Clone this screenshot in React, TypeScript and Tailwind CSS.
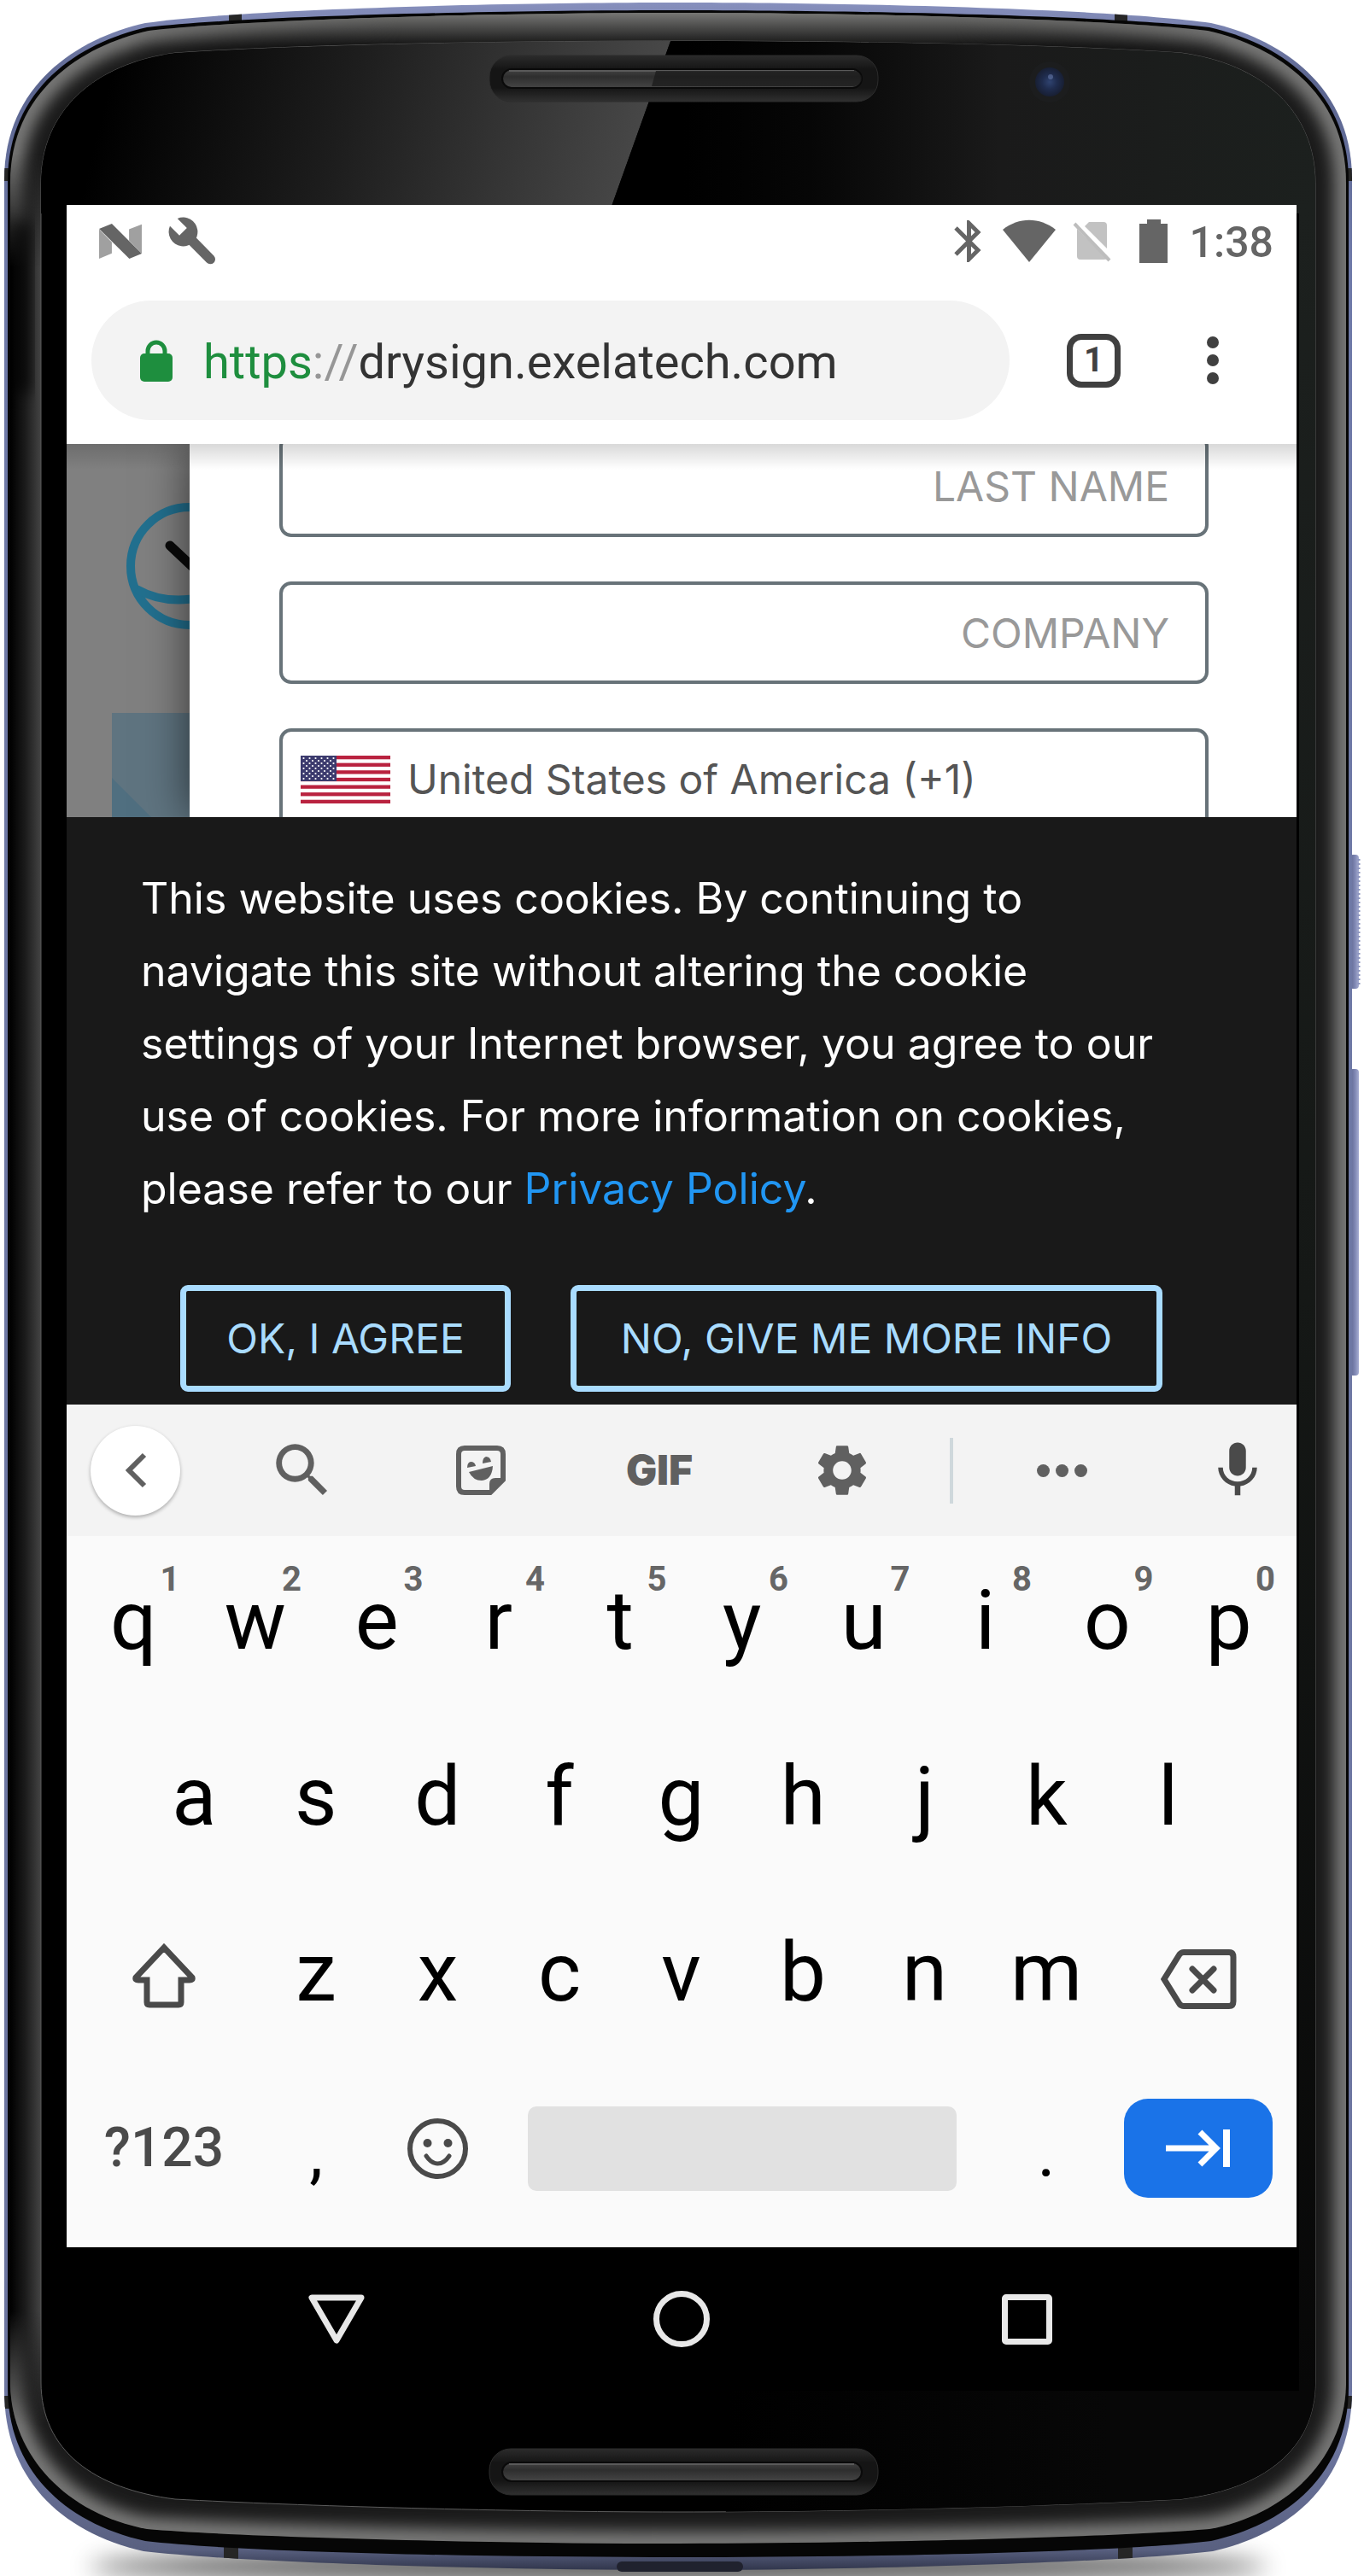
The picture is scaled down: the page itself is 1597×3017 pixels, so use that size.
import type { ReactNode } from "react";
import { MdBluetooth, MdMic, MdSearch, MdSettings } from "react-icons/md";

const OUTER =
  "M5 210 C5 100 90 45 170 27 C290 10 600 3 794 3 C988 3 1298 10 1418 27 C1498 45 1583 100 1583 210 V2800 C1583 2900 1520 2965 1420 2988 C1300 3002 1000 3010 794 3010 C588 3010 290 3002 168 2988 C68 2965 5 2900 5 2800 Z";
const RIM =
  "M9 212 C9 104 92 50 172 32 C292 18 600 12 794 12 C988 12 1296 18 1416 32 C1496 50 1579 104 1579 212 V2796 C1579 2890 1516 2954 1418 2976 C1300 2990 1000 2995 794 2995 C588 2995 290 2990 170 2976 C72 2954 9 2890 9 2796 Z";
const BEZEL =
  "M12 214 C12 108 94 54 174 36 C294 22 600 15 794 15 C988 15 1294 22 1414 36 C1494 54 1576 108 1576 214 V2790 C1576 2874 1512 2944 1416 2962 C1300 2972 1000 2979 794 2979 C588 2979 290 2972 172 2962 C76 2944 12 2874 12 2790 Z";
const GLASS =
  "M48 215 C48 130 110 75 205 62 C350 52 600 48 794 48 C988 48 1238 52 1383 62 C1478 75 1540 130 1540 215 V2790 C1540 2870 1478 2915 1383 2927 C1238 2935 988 2942 794 2942 C600 2942 350 2935 205 2927 C110 2915 48 2870 48 2790 Z";

function Grille({ y, split }: { y: number; split?: boolean }) {
  return (
    <g>
      <rect x="573" y={y} width="455" height="54" rx="25" fill="url(#grilleOuter)" stroke="#2c2c2c" />
      <rect x="588" y={y + 16} width="421" height="22" rx="11" fill="url(#grilleInner)" stroke="#0a0a0a" strokeWidth="2" />
      <rect x="596" y={y + 17} width="404" height="2" fill="#5a5a5a" />
      {split && <path d={`M768 ${y + 18} H1000 a9 9 0 0 1 0 18 H763 Z`} fill="#1b1b1b" opacity="0.75" />}
    </g>
  );
}

function DeviceFrame() {
  return (
    <svg className="absolute inset-0 h-full w-full" viewBox="0 0 1597 3017" preserveAspectRatio="none" aria-hidden="true">
      <defs>
        <linearGradient id="metal" x1="0" x2="0" y1="0" y2="1">
          <stop offset="0" stopColor="#8790bd" />
          <stop offset="0.03" stopColor="#5b658f" />
          <stop offset="0.1" stopColor="#6f7aa8" />
          <stop offset="0.95" stopColor="#6d76a0" />
          <stop offset="0.992" stopColor="#596080" />
          <stop offset="1" stopColor="#31364c" />
        </linearGradient>
        <linearGradient id="leftSide" gradientUnits="userSpaceOnUse" x1="12" x2="48" y1="0" y2="0">
          <stop offset="0" stopColor="#000" />
          <stop offset="0.5" stopColor="#1c1c1c" />
          <stop offset="1" stopColor="#444" />
        </linearGradient>
        <linearGradient id="sideFade" x1="0" x2="0" y1="0" y2="1">
          <stop offset="0" stopColor="#000" />
          <stop offset="0.05" stopColor="#fff" />
          <stop offset="0.95" stopColor="#fff" />
          <stop offset="1" stopColor="#000" />
        </linearGradient>
        <mask id="sideMask">
          <rect x="0" y="180" width="60" height="2660" fill="url(#sideFade)" />
        </mask>
        <linearGradient id="topLight" gradientUnits="userSpaceOnUse" x1="0" x2="0" y1="15" y2="56">
          <stop offset="0" stopColor="#777775" />
          <stop offset="0.4" stopColor="#4c4c4b" />
          <stop offset="1" stopColor="#0c0c0c" />
        </linearGradient>
        <linearGradient id="topSpread" x1="0" x2="1" y1="0" y2="0">
          <stop offset="0" stopColor="#000" />
          <stop offset="0.25" stopColor="#fff" />
          <stop offset="0.75" stopColor="#fff" />
          <stop offset="1" stopColor="#000" />
        </linearGradient>
        <mask id="topMask">
          <rect x="150" y="0" width="1288" height="80" fill="url(#topSpread)" />
        </mask>
        <linearGradient id="gloss" gradientUnits="userSpaceOnUse" x1="130" x2="740" y1="90" y2="240">
          <stop offset="0" stopColor="#000" />
          <stop offset="0.45" stopColor="#1e1e1e" />
          <stop offset="1" stopColor="#484848" />
        </linearGradient>
        <linearGradient id="rightGlass" gradientUnits="userSpaceOnUse" x1="800" x2="1540" y1="0" y2="0">
          <stop offset="0" stopColor="#000" />
          <stop offset="0.2" stopColor="#060606" />
          <stop offset="0.5" stopColor="#1a1a1a" />
          <stop offset="1" stopColor="#1c201e" />
        </linearGradient>
        <linearGradient id="bottomGlass" gradientUnits="userSpaceOnUse" x1="850" x2="1300" y1="0" y2="0">
          <stop offset="0" stopColor="#000" />
          <stop offset="1" stopColor="#070707" />
        </linearGradient>
        <linearGradient id="rightStrip" x1="0" x2="0" y1="0" y2="1">
          <stop offset="0" stopColor="#1c201e" />
          <stop offset="0.5" stopColor="#151816" />
          <stop offset="1" stopColor="#070707" />
        </linearGradient>
        <linearGradient id="grilleOuter" x1="0" x2="0" y1="0" y2="1">
          <stop offset="0" stopColor="#2b2b2b" />
          <stop offset="0.3" stopColor="#151515" />
          <stop offset="0.7" stopColor="#151515" />
          <stop offset="1" stopColor="#303030" />
        </linearGradient>
        <linearGradient id="grilleInner" x1="0" x2="0" y1="0" y2="1">
          <stop offset="0" stopColor="#444" />
          <stop offset="0.4" stopColor="#2e2e2e" />
          <stop offset="1" stopColor="#454545" />
        </linearGradient>
        <linearGradient id="sideKey" x1="0" x2="1" y1="0" y2="0">
          <stop offset="0" stopColor="#59628c" />
          <stop offset="0.6" stopColor="#8088b4" />
          <stop offset="1" stopColor="#a7aed2" />
        </linearGradient>
        <radialGradient id="lens">
          <stop offset="0" stopColor="#2f4370" />
          <stop offset="0.5" stopColor="#1f2c4e" />
          <stop offset="1" stopColor="#181f33" />
        </radialGradient>
        <filter id="soft" x="-10%" y="-10%" width="120%" height="120%">
          <feGaussianBlur stdDeviation="9" />
        </filter>
        <filter id="shadow" x="-20%" y="-200%" width="140%" height="500%">
          <feGaussianBlur stdDeviation="14" />
        </filter>
        <clipPath id="outerClip">
          <path d={OUTER} />
        </clipPath>
        <clipPath id="bezelClip">
          <path d={BEZEL} />
        </clipPath>
        <clipPath id="glassClip">
          <path d={GLASS} />
        </clipPath>
      </defs>
      <ellipse cx="794" cy="3006" rx="690" ry="22" fill="#000" opacity="0.6" filter="url(#shadow)" />
      <rect x="1580" y="1001" width="11" height="157" rx="4" fill="url(#sideKey)" />
      <path d="M1591 1006 V1153" stroke="#8e96bf" strokeWidth="3" strokeDasharray="2 3" />
      <rect x="1580" y="1252" width="11" height="359" rx="4" fill="url(#sideKey)" />
      <path d={OUTER} fill="url(#metal)" />
      <g fill="#262626" clipPath="url(#outerClip)">
        <path d="M268 5 h15 v25 h-15z M1305 5 h15 v25 h-15z" />
        <path d="M5 197 h6 v15 h-6z M1577 197 h6 v15 h-6z M5 2806 h6 v15 h-6z M1577 2806 h6 v15 h-6z" />
        <path d="M262 2975 h17 v30 h-17z M1309 2975 h17 v30 h-17z" />
      </g>
      <rect x="722" y="3000" width="148" height="12" rx="6" fill="#20222e" />
      <path d={RIM} fill="#060606" />
      <path d={BEZEL} fill="#1a1a1a" />
      <g clipPath="url(#bezelClip)">
        <path d={BEZEL} fill="none" stroke="#7c7c7a" strokeWidth="28" filter="url(#soft)" />
        <rect x="150" y="10" width="1288" height="60" fill="url(#topLight)" mask="url(#topMask)" />
        <rect x="0" y="180" width="60" height="2660" fill="url(#leftSide)" mask="url(#sideMask)" />
        <rect x="12" y="260" width="26" height="200" fill="#000" opacity="0.6" filter="url(#soft)" />
      </g>
      <path d={GLASS} fill="#000" stroke="#5b5b5b" strokeWidth="1" />
      <g clipPath="url(#glassClip)">
        <path d="M40 40 H788 L713 250 H40 Z" fill="url(#gloss)" />
        <path d="M788 40 H1545 V250 H713 Z" fill="url(#rightGlass)" />
        <rect x="1521" y="240" width="30" height="2560" fill="url(#rightStrip)" />
        <rect x="850" y="2800" width="700" height="160" fill="url(#bottomGlass)" />
      </g>
      <Grille y={65} split />
      <Grille y={2868} />
      <circle cx="1229" cy="96" r="24" fill="#1c1d1e" />
      <circle cx="1229" cy="96" r="17" fill="url(#lens)" />
      <circle cx="1230" cy="90" r="3" fill="#7286b8" opacity="0.5" />
    </svg>
  );
}

function StatusBar() {
  return (
    <div className="flex h-[84px] items-center pr-[27px] pl-[38px] text-[#656565]">
      <svg className="h-[41px] w-[50px]" viewBox="0 0 151 124" aria-hidden="true">
        <path d="M0 20 L45 66 V105 L0 124 Z M106 20 L151 2 V106 L106 60 Z" fill="#a0a0a0" />
        <path d="M0 18 L45 0 L151 106 L107 124 Z" fill="currentColor" />
      </svg>
      <svg className="ml-[31px] h-[56px] w-[56px]" viewBox="0 0 172 172" aria-hidden="true">
        <path d="M33 6 A52 52 0 1 1 6 33 L40 67 L67 40 Z" fill="currentColor" />
        <path d="M84 84 L151 152" stroke="currentColor" strokeWidth="36" strokeLinecap="round" />
      </svg>
      <div className="ml-auto flex items-center">
        <MdBluetooth className="size-[59px]" />
        <svg className="ml-[10px] h-[50px] w-[62px]" viewBox="0 0 62 50" aria-hidden="true">
          <path d="M0 12 C19 -3 43 -3 62 12 L31 50 Z" fill="currentColor" />
        </svg>
        <svg className="ml-[20px] h-[50px] w-[46px]" viewBox="0 0 46 50" aria-hidden="true">
          <path d="M14 8 L19 3 H36 Q40 3 40 7 V34 Z M5 11 L40 46 Q39 47 36 47 H9 Q5 47 5 43 Z" fill="#c2c2c2" />
          <path d="M2 5 L43 48" stroke="#bdbdbd" strokeWidth="4" />
        </svg>
        <svg className="ml-8 h-[51px] w-[33px]" viewBox="0 0 33 51" aria-hidden="true">
          <path d="M0 5 H9 V0 H25 V5 H33 V51 H0 Z" fill="currentColor" />
        </svg>
        <span className="ml-[26px] pt-1 text-[50px] leading-none font-medium">1:38</span>
      </div>
    </div>
  );
}

function AddressBar() {
  return (
    <div className="flex h-[196px] items-center pr-[84px] pl-[29px] text-[#404040]">
      <a href="#site" className="flex h-[140px] flex-1 items-center rounded-full bg-[#f3f3f3] pl-[57px]">
        <svg className="h-[49px] w-[38px]" viewBox="0 0 38 49" aria-hidden="true">
          <rect y="16" width="38" height="33" rx="5" fill="#1e8e3e" />
          <path d="M9 18 V13 a10 10 0 0 1 20 0 V18" fill="none" stroke="#1e8e3e" strokeWidth="5" />
        </svg>
        <span className="ml-9 pt-1 text-[56px] leading-none whitespace-nowrap text-[#333]">
          <span className="text-[#1e8e3e]">https</span>
          <span className="text-[#969696]">://</span>drysign.exelatech.com
        </span>
      </a>
      <button
        type="button"
        aria-label="Open tabs"
        className="ml-[67px] flex size-[63px] items-center justify-center rounded-[17px] border-[7px] border-[#404040] text-[40px] leading-none font-bold"
      >
        1
      </button>
      <button type="button" aria-label="Menu" className="ml-[94px] flex w-[28px] flex-col items-center gap-[7px]">
        <span className="size-[14px] rounded-full bg-[#404040]" />
        <span className="size-[14px] rounded-full bg-[#404040]" />
        <span className="size-[14px] rounded-full bg-[#404040]" />
      </button>
    </div>
  );
}

function Flag() {
  const stars = [];
  for (let row = 0; row < 9; row++) {
    const count = row % 2 === 0 ? 6 : 5;
    for (let i = 0; i < count; i++) {
      stars.push(<circle key={`${row}-${i}`} cx={3.5 + i * 7 + (row % 2) * 3.5} cy={3 + row * 3} r="1.1" fill="#fff" />);
    }
  }
  return (
    <svg className="h-[56px] w-[105px] shrink-0" viewBox="0 0 105 56" aria-hidden="true">
      <rect width="105" height="56" fill="#fff" />
      {[0, 1, 2, 3, 4, 5, 6].map((i) => (
        <rect key={i} y={i * 8.62} width="105" height="4.3" fill="#b9223f" />
      ))}
      <rect width="42" height="30" fill="#3c3b6e" />
      {stars}
    </svg>
  );
}

function SignupForm() {
  return (
    <div className="relative flex h-[437px] overflow-hidden bg-[#808080]">
      <div className="flex w-[144px] shrink-0 flex-col">
        <svg className="mt-[69px] ml-[70px] h-[148px] w-[74px]" viewBox="0 0 74 148" aria-hidden="true">
          <circle cx="74" cy="74" r="69" fill="none" stroke="#22708f" strokeWidth="10" />
          <path d="M12 101 Q42 118 80 112" fill="none" stroke="#22708f" strokeWidth="10" />
          <path d="M51 50 L84 81" stroke="#0a0a0a" strokeWidth="11" strokeLinecap="round" />
        </svg>
        <svg className="mt-[98px] ml-[53px] h-[122px] w-[91px]" viewBox="0 0 91 122" aria-hidden="true">
          <rect width="91" height="122" fill="#5f7480" />
          <path d="M0 76 L46 122 H0 Z" fill="#506f80" />
        </svg>
      </div>
      <div className="relative flex flex-1 flex-col bg-white pr-[103px] pl-[105px] font-[Inter,sans-serif] text-[48px] shadow-[0_0_50px_rgba(0,0,0,0.6)]">
        <div className="-mt-[11px] flex flex-col gap-[52px]">
          <input
            aria-label="Last name"
            placeholder="LAST NAME"
            className="h-[120px] w-full rounded-[14px] border-4 border-[#687379] px-[42px] text-right placeholder:text-[#999]"
          />
          <input
            aria-label="Company"
            placeholder="COMPANY"
            className="h-[120px] w-full rounded-[14px] border-4 border-[#687379] px-[42px] text-right placeholder:text-[#999]"
          />
          <div className="flex h-[120px] items-center gap-5 rounded-[14px] border-4 border-[#687379] pl-[21px] text-[#555]">
            <Flag />
            <select aria-label="Country" className="flex-1 appearance-none bg-transparent outline-none">
              <option>United States of America (+1)</option>
            </select>
          </div>
        </div>
      </div>
      <div className="pointer-events-none absolute inset-x-0 top-0 h-[30px] bg-linear-to-b from-black/15 to-transparent" />
    </div>
  );
}

function CookieNotice() {
  return (
    <section className="h-[688px] bg-[#191919] pt-[53px] pl-[87px] font-[Inter,sans-serif] text-[50px] text-white">
      <p className="leading-[85px] whitespace-nowrap">
        This website uses cookies. By continuing to
        <br />
        navigate this site without altering the cookie
        <br />
        settings of your Internet browser, you agree to our
        <br />
        use of cookies. For more information on cookies,
        <br />
        please refer to our{" "}
        <a href="#privacy" className="text-[#2196f3]">
          Privacy Policy
        </a>
        .
      </p>
      <div className="mt-[70px] ml-[46px] flex gap-[70px] text-[48px] whitespace-nowrap text-[#a9dcff]">
        <button type="button" className="h-[125px] w-[387px] rounded-[9px] border-[7px] border-[#a9dcff]">
          OK, I AGREE
        </button>
        <button type="button" className="h-[125px] w-[693px] rounded-[9px] border-[7px] border-[#a9dcff]">
          NO, GIVE ME MORE INFO
        </button>
      </div>
    </section>
  );
}

function Toolbar() {
  return (
    <div className="grid h-[154px] grid-cols-[161fr_230fr_188fr_230fr_198fr_58fr_200fr_175fr] items-center justify-items-center bg-[#f3f3f3] text-[#606060]">
      <button type="button" aria-label="Back" className="flex size-[105px] items-center justify-center rounded-full bg-white shadow-[0_2px_4px_rgba(0,0,0,0.3)]">
        <svg className="h-[42px] w-[26px]" viewBox="0 0 26 42" aria-hidden="true">
          <path d="M23 3 L5 21 L23 39" fill="none" stroke="currentColor" strokeWidth="6" />
        </svg>
      </button>
      <button type="button" aria-label="Search">
        <MdSearch className="size-[82px]" />
      </button>
      <button type="button" aria-label="Stickers">
        <svg className="size-[58px]" viewBox="0 0 58 58" fill="none" aria-hidden="true">
          <path d="M10 3 H48 Q55 3 55 10 V40 L40 55 H10 Q3 55 3 48 V10 Q3 3 10 3 Z" stroke="currentColor" strokeWidth="6" />
          <path d="M39 57 V45 Q39 38 46 38 H57 Z" fill="currentColor" />
          <path d="M15 31 L43 24 Q42 40 30 41 Q20 41 15 31 Z" fill="currentColor" />
          <path d="M13 26 Q13 20 17 19 Q22 19 23 24 Z M31 21 Q31 14 35 13 Q40 13 41 19 Z" fill="currentColor" />
        </svg>
      </button>
      <button type="button" className="font-[Inter,sans-serif] text-[48px] leading-none font-black">
        GIF
      </button>
      <button type="button" aria-label="Settings">
        <MdSettings className="size-[72px]" />
      </button>
      <span className="h-[77px] w-[4px] bg-[#cfd8dc]" />
      <button type="button" aria-label="More" className="flex gap-[7px]">
        <span className="size-[15px] rounded-full bg-[#606060]" />
        <span className="size-[15px] rounded-full bg-[#606060]" />
        <span className="size-[15px] rounded-full bg-[#606060]" />
      </button>
      <button type="button" aria-label="Voice input" className="justify-self-end pr-[30px] text-[#4a4a4a]">
        <MdMic className="size-[78px]" />
      </button>
    </div>
  );
}

function Key({ children, hint, label, className = "flex-1" }: { children?: ReactNode; hint?: string; label?: string; className?: string }) {
  return (
    <button type="button" aria-label={label} className={`relative flex h-full min-w-0 items-center justify-center pb-2 ${className}`}>
      {children}
      {hint && <span className="absolute top-[31px] right-[17px] text-[40px] leading-none font-bold text-[#666]">{hint}</span>}
    </button>
  );
}

function Keyboard() {
  return (
    <div className="bg-[#fafafa] pr-[8px] pb-[9px] pl-[7px] text-[96px] leading-none text-black">
      <div className="flex h-[206px]">
        {"qwertyuiop".split("").map((c, i) => (
          <Key key={c} hint={String((i + 1) % 10)}>
            {c}
          </Key>
        ))}
      </div>
      <div className="flex h-[206px] px-[71px]">
        {"asdfghjkl".split("").map((c) => (
          <Key key={c}>{c}</Key>
        ))}
      </div>
      <div className="flex h-[206px]">
        <Key label="Shift" className="flex-[1.5] text-[#4a4a4a]">
          <svg className="mt-2 h-[76px] w-[80px]" viewBox="0 0 80 76" aria-hidden="true">
            <path d="M40 5 L73 40 Q74 43 70 43 H60 V69 Q60 72 57 72 H23 Q20 72 20 69 V43 H10 Q6 43 7 40 Z" fill="none" stroke="currentColor" strokeWidth="7" />
          </svg>
        </Key>
        {"zxcvbnm".split("").map((c) => (
          <Key key={c}>{c}</Key>
        ))}
        <Key label="Backspace" className="flex-[1.5] text-[#4a4a4a]">
          <svg className="mt-4 h-[70px] w-[89px]" viewBox="0 0 89 70" fill="none" stroke="currentColor" strokeWidth="7" aria-hidden="true">
            <path d="M27 3.5 H80 Q85 3.5 85 9 V61 Q85 66.5 80 66.5 H27 Q24 66.5 22 64 L4 35 L22 6 Q24 3.5 27 3.5 Z" />
            <path d="M37 23 L62 48 M62 23 L37 48" strokeLinecap="round" />
          </svg>
        </Key>
      </div>
      <div className="flex h-[206px]">
        <Key className="flex-[1.5] text-[64px] font-medium text-[#4a4a4a]">?123</Key>
        <Key className="flex-1 pt-3 text-[80px]">,</Key>
        <Key label="Emoji">
          <svg className="size-[71px]" viewBox="0 0 71 71" aria-hidden="true">
            <circle cx="35.5" cy="35.5" r="32.5" fill="none" stroke="#4a4a4a" strokeWidth="6" />
            <circle cx="23.5" cy="29" r="5" fill="#4a4a4a" />
            <circle cx="47.5" cy="29" r="5" fill="#4a4a4a" />
            <path d="M22 44 Q28 53 35.5 53 Q43 53 49 44" fill="none" stroke="#4a4a4a" strokeWidth="5" strokeLinecap="round" />
          </svg>
        </Key>
        <Key label="Space" className="flex-4">
          <span className="mx-[34px] h-[99px] flex-1 rounded-[10px] bg-[#e1e1e1]" />
        </Key>
        <Key className="flex-1 pt-3 text-[80px]">.</Key>
        <Key label="Next" className="flex-[1.5]">
          <span className="mx-5 flex h-[116px] flex-1 items-center justify-center rounded-[28px] bg-[#1a73e8]">
            <svg className="h-[44px] w-[76px]" viewBox="0 0 76 44" fill="none" stroke="#fff" strokeWidth="7" aria-hidden="true">
              <path d="M0 22 H58 M40 3 L59 22 L40 41" />
              <path d="M71 0 V44" strokeWidth="8" />
            </svg>
          </span>
        </Key>
      </div>
    </div>
  );
}

function NavigationBar() {
  return (
    <nav className="grid h-[168px] grid-cols-3 items-center justify-items-center bg-black px-[114px]">
      <button type="button" aria-label="Back">
        <svg className="h-[60px] w-[68px]" viewBox="0 0 68 60" aria-hidden="true">
          <path d="M5 5 H63 L34 55 Z" fill="none" stroke="#e8e8e8" strokeWidth="7" strokeLinejoin="round" />
        </svg>
      </button>
      <button type="button" aria-label="Home" className="size-[66px] rounded-full border-[7px] border-[#e8e8e8]" />
      <button type="button" aria-label="Recent apps" className="size-[59px] rounded-[5px] border-[7px] border-[#e8e8e8]" />
    </nav>
  );
}

export default function App() {
  return (
    <main className="relative overflow-hidden bg-white pt-[240px] pr-[79px] pb-[217px] pl-[78px] font-[Roboto,sans-serif]">
      <DeviceFrame />
      <div className="relative bg-white">
        <StatusBar />
        <AddressBar />
        <SignupForm />
        <CookieNotice />
        <Toolbar />
        <Keyboard />
        <NavigationBar />
      </div>
    </main>
  );
}
